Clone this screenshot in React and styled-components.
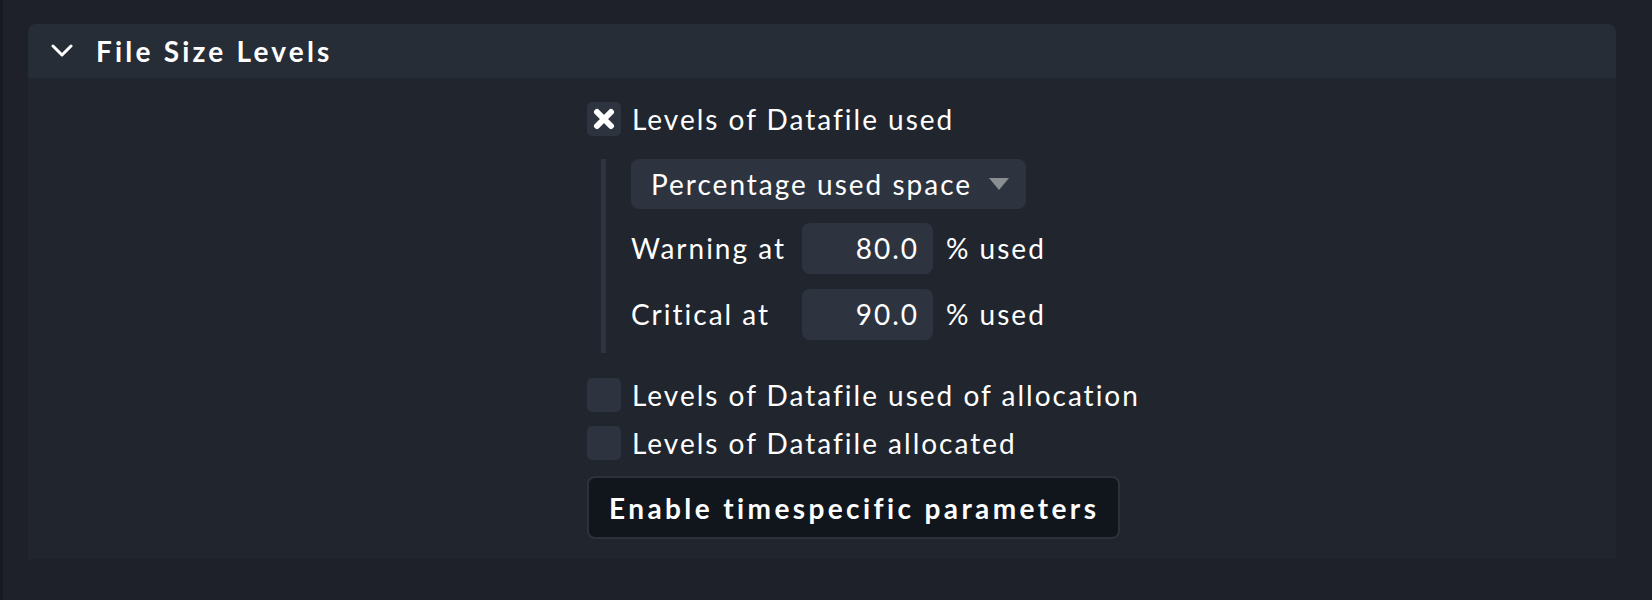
import React from "react";
import styled, { createGlobalStyle } from "styled-components";

const Global = createGlobalStyle`
  html, body {
    margin: 0;
    padding: 0;
    background: #1e2129;
  }
  body {
    font-family: Lato, "Liberation Sans", sans-serif;
    font-variant-ligatures: none;
    color: #ffffff;
  }
`;

const Page = styled.div`
  height: 600px;
  box-sizing: border-box;
  border-left: 3px solid #171a20;
  padding: 24px 36px 0 25px;
`;

const Card = styled.section`
  display: flex;
  flex-direction: column;
`;

const Header = styled.div`
  height: 54px;
  display: flex;
  align-items: center;
  gap: 23px;
  padding-left: 23px;
  background: #272d37;
  border-radius: 8px 8px 0 0;
`;

const Title = styled.h2`
  margin: 0;
  font-size: 28px;
  font-weight: 700;
  letter-spacing: 3.2px;
`;

const Body = styled.div`
  height: 481px;
  box-sizing: border-box;
  background: #21262e;
  padding: 24px 0 0 559px;
  display: flex;
  flex-direction: column;
  align-items: flex-start;
  font-size: 28px;
  letter-spacing: 2px;
`;

const CheckRow = styled.label`
  display: flex;
  align-items: center;
  gap: 11px;
  height: 34px;
  margin-top: ${(p) => p.$top || 0}px;
`;

const Box = styled.span`
  width: 34px;
  height: 34px;
  border-radius: 5px;
  background: #2d3440;
  display: flex;
  align-items: center;
  justify-content: center;
`;

const Nested = styled.div`
  margin: 23px 0 0 14px;
  border-left: 5px solid #2e3540;
  padding: 0 0 14px 25px;
  display: flex;
  flex-direction: column;
  gap: 14px;
`;

const Select = styled.div`
  height: 50px;
  width: 395px;
  box-sizing: border-box;
  padding: 0 17px 0 20px;
  display: flex;
  align-items: center;
  justify-content: space-between;
  background: #2d3440;
  border-radius: 8px;
`;

const LevelRow = styled.div`
  display: flex;
  align-items: center;
  height: 50px;
  margin-top: ${(p) => p.$top || 0}px;
`;

const Label = styled.span`
  width: 171px;
`;

const Input = styled.span`
  width: 131px;
  height: 51px;
  box-sizing: border-box;
  display: flex;
  align-items: center;
  justify-content: flex-end;
  padding-right: 14px;
  background: #2d3440;
  border-radius: 8px;
`;

const Unit = styled.span`
  margin-left: 13px;
`;

const Button = styled.button`
  margin-top: 16px;
  width: 533px;
  height: 63px;
  box-sizing: border-box;
  background: #11161c;
  border: 2px solid #2c323b;
  border-radius: 8px;
  color: #ffffff;
  font-family: Lato, "Liberation Sans", sans-serif;
  font-variant-ligatures: none;
  font-size: 28px;
  font-weight: 700;
  letter-spacing: 3.4px;
  text-align: left;
  padding: 0 0 0 20px;
`;

const Chevron = () => (
  <svg width="22" height="14" viewBox="0 0 22 14">
    <path d="M2 2 L11 11 L20 2" fill="none" stroke="#fff" strokeWidth="3" strokeLinecap="round" strokeLinejoin="round" />
  </svg>
);

const Cross = () => (
  <svg width="22" height="22" viewBox="0 0 22 22">
    <path d="M4 4 L18 18 M18 4 L4 18" stroke="#fff" strokeWidth="6" strokeLinecap="round" />
  </svg>
);

const Caret = () => (
  <svg width="20" height="12" viewBox="0 0 20 12">
    <path d="M0 0 H20 L10 12 Z" fill="#8a8d92" />
  </svg>
);

const Check = ({ checked, label, top }) => (
  <CheckRow $top={top}>
    <Box>{checked && <Cross />}</Box>
    {label}
  </CheckRow>
);

const Level = ({ label, value, top }) => (
  <LevelRow $top={top}>
    <Label>{label}</Label>
    <Input>{value}</Input>
    <Unit>% used</Unit>
  </LevelRow>
);

export default function App() {
  return (
    <>
      <Global />
      <Page>
        <Card>
          <Header>
            <Chevron />
            <Title>File Size Levels</Title>
          </Header>
          <Body>
            <Check checked label="Levels of Datafile used" />
            <Nested>
              <Select>
                Percentage used space
                <Caret />
              </Select>
              <Level label="Warning at" value="80.0" />
              <Level label="Critical at" value="90.0" top={2} />
            </Nested>
            <Check label="Levels of Datafile used of allocation" top={25} />
            <Check label="Levels of Datafile allocated" top={14} />
            <Button>Enable timespecific parameters</Button>
          </Body>
        </Card>
      </Page>
    </>
  );
}
